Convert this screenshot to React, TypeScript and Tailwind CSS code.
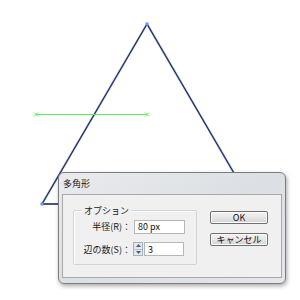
import React from "react";

const jp = { fontFamily: '"Noto Sans CJK JP", "Liberation Sans", sans-serif' };

function Btn({ children }: { children: React.ReactNode }) {
  return (
    <div className="flex h-[13px] w-[58px] items-center justify-center rounded-[2px] border border-[#707070] bg-gradient-to-b from-[#f4f4f4] via-[#e6e6e6] to-[#d4d4d4] text-[9px] leading-none text-[#111] shadow-[inset_0_0_0_1px_#fbfbfb]">
      {children}
    </div>
  );
}

export default function App() {
  return (
    <div className="relative h-[300px] w-[300px] overflow-hidden bg-white" style={jp}>
      <svg className="absolute left-0 top-0" width="300" height="300" viewBox="0 0 300 300">
        <polygon points="147,24 42,204 252,204" fill="none" stroke="#6a86c8" strokeWidth="2.2" strokeOpacity="0.5" />
        <polygon points="147,24 42,204 252,204" fill="none" stroke="#233063" strokeWidth="1.3" />
        <rect x="145.5" y="22.5" width="3" height="3" fill="#6b96ff" />
        <rect x="40.5" y="202.5" width="3" height="3" fill="#6b96ff" />
        <line x1="36" y1="114.5" x2="147" y2="114.5" stroke="#5cf05c" strokeWidth="1" />
        <path d="M34,112.5 L38,116.5 M38,112.5 L34,116.5" stroke="#5cf05c" strokeWidth="1" />
        <path d="M145,112.5 L149,116.5 M149,112.5 L145,116.5" stroke="#5cf05c" strokeWidth="1" />
      </svg>

      <div className="absolute left-[58px] top-[172px] flex h-[112px] w-[228px] flex-col rounded-[6px] border border-[#7d7d7d] bg-gradient-to-br from-[#e9ebee] via-[#dcdfe3] to-[#e4e6e9] px-[3px] pb-[5px] shadow-[1px_2px_4px_rgba(0,0,0,0.35)]">
        <div className="flex h-[21px] items-center pl-[1px] text-[9px] leading-none text-[#1a1a1a]">多角形</div>
        <div className="flex flex-1 border border-[#a9a9a9] bg-[#f0f0f0] pl-[10px] pt-[15px]">
          <div className="relative h-[55px] w-[124px] rounded-[2px] border border-[#d0d5d9] shadow-[inset_1px_1px_0_#fff]">
            <div className="absolute left-[8px] top-[-6px] bg-[#f0f0f0] px-[2px] text-[9px] leading-[11px] text-[#1a1a1a]">
              オプション
            </div>
            <div className="flex flex-col gap-[9px] pt-[9px]">
              <div className="flex h-[13px] items-center">
                <div className="w-[57px] text-right text-[9px] leading-none text-[#1a1a1a]">半径(R)：</div>
                <div className="ml-[3px] flex h-[14px] w-[51px] items-center border border-[#b4b8bd] bg-white pl-[3px] text-[9px] leading-none text-[#111]">
                  80 px
                </div>
              </div>
              <div className="flex h-[14px] items-center">
                <div className="w-[57px] text-right text-[9px] leading-none text-[#1a1a1a]">辺の数(S)：</div>
                <div className="ml-[2px] flex h-[14px] w-[10px] flex-col border border-[#a8b0bb] bg-[#e3e8ee]">
                  <div className="flex flex-1 items-center justify-center border-b border-[#b9c1cc]">
                    <svg width="5" height="3" viewBox="0 0 5 3"><path d="M0,3 L2.5,0 L5,3 Z" fill="#4a5a78" /></svg>
                  </div>
                  <div className="flex flex-1 items-center justify-center">
                    <svg width="5" height="3" viewBox="0 0 5 3"><path d="M0,0 L2.5,3 L5,0 Z" fill="#4a5a78" /></svg>
                  </div>
                </div>
                <div className="ml-[1px] flex h-[14px] w-[40px] items-center border border-[#b4b8bd] bg-white pl-[3px] text-[9px] leading-none text-[#111]">
                  3
                </div>
              </div>
            </div>
          </div>
          <div className="ml-[13px] flex flex-col gap-[9px] pt-[1px]">
            <Btn>OK</Btn>
            <Btn>キャンセル</Btn>
          </div>
        </div>
      </div>
    </div>
  );
}
